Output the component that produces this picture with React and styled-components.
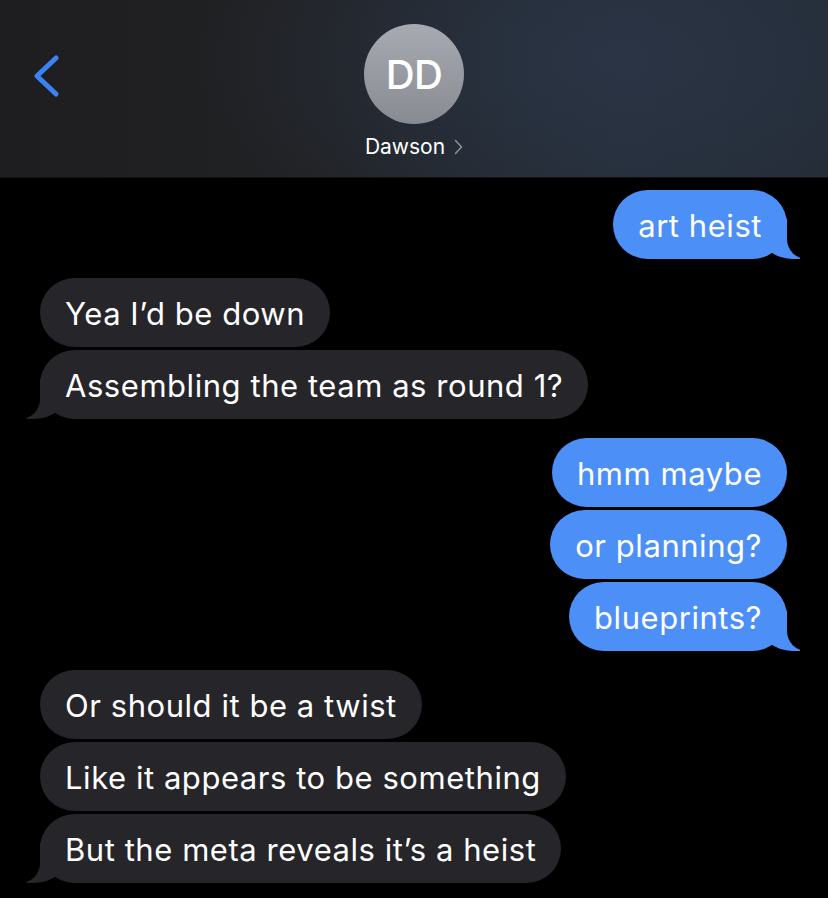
import React from 'react'
import styled, { createGlobalStyle } from 'styled-components'

const GlobalStyle = createGlobalStyle`
  html, body {
    margin: 0;
    padding: 0;
    background: #000;
  }
  body {
    font-family: Inter, "Noto Sans", "Liberation Sans", sans-serif;
    -webkit-font-smoothing: antialiased;
  }
`

const messages = [
  { id: 1, me: true, group: [{ text: 'art heist' }] },
  {
    id: 2,
    me: false,
    group: [{ text: 'Yea I’d be down' }, { text: 'Assembling the team as round 1?' }],
  },
  {
    id: 3,
    me: true,
    group: [{ text: 'hmm maybe' }, { text: 'or planning?' }, { text: 'blueprints?' }],
  },
  {
    id: 4,
    me: false,
    group: [
      { text: 'Or should it be a twist' },
      { text: 'Like it appears to be something' },
      { text: 'But the meta reveals it’s a heist' },
    ],
  },
]

const Screen = styled.div`
  width: 828px;
  height: 898px;
  background: #000;
  overflow: hidden;
  display: flex;
  flex-direction: column;
`

const Header = styled.header`
  height: 178px;
  flex: none;
  display: grid;
  grid-template-columns: 100px 1fr 100px;
  background:
    radial-gradient(ellipse 420px 220px at 620px 60px, rgba(42, 53, 70, 0.9), rgba(42, 53, 70, 0) 100%),
    linear-gradient(90deg, #1e1e20 0%, #212225 40%, #262d38 75%, #232a34 100%);
  border-bottom: 1px solid #111214;
  box-sizing: border-box;
`

const BackButton = styled.div`
  padding: 55px 0 0 31px;
  svg {
    display: block;
  }
`

const Contact = styled.div`
  display: flex;
  flex-direction: column;
  align-items: center;
  padding-top: 24px;
`

const Avatar = styled.div`
  width: 100px;
  height: 100px;
  border-radius: 50%;
  background: linear-gradient(180deg, #a8aab1 0%, #898b93 100%);
  display: flex;
  align-items: center;
  justify-content: center;
  color: #fff;
  font-size: 40px;
  font-weight: 500;
  letter-spacing: -0.5px;
`

const Name = styled.div`
  margin-top: 10px;
  display: flex;
  align-items: center;
  gap: 9px;
  color: #fff;
  font-size: 21px;
  svg {
    display: block;
  }
`

const Thread = styled.main`
  display: flex;
  flex-direction: column;
  gap: 19px;
  padding: 12px 41px 0 40px;
`

const Group = styled.div`
  display: flex;
  flex-direction: column;
  align-items: ${(p) => (p.$me ? 'flex-end' : 'flex-start')};
  gap: 3px;
`

const Bubble = styled.div`
  position: relative;
  height: 69px;
  box-sizing: border-box;
  display: flex;
  align-items: center;
  padding: 2px 25px 0;
  border-radius: 35px;
  font-size: 31px;
  letter-spacing: 0.55px;
  color: #fff;
  white-space: nowrap;
  background: ${(p) => (p.$me ? '#4c8ff6' : '#262529')};

  ${(p) =>
    p.$tail &&
    (p.$me
      ? `
    &::before {
      content: "";
      position: absolute;
      bottom: 0;
      right: -13px;
      width: 40px;
      height: 40px;
      background: #4c8ff6;
      border-bottom-left-radius: 32px 28px;
    }
    &::after {
      content: "";
      position: absolute;
      bottom: 0;
      right: -52px;
      width: 52px;
      height: 40px;
      background: #000;
      border-bottom-left-radius: 20px;
    }
  `
      : `
    &::before {
      content: "";
      position: absolute;
      bottom: 0;
      left: -13px;
      width: 40px;
      height: 40px;
      background: #262529;
      border-bottom-right-radius: 32px 28px;
    }
    &::after {
      content: "";
      position: absolute;
      bottom: 0;
      left: -52px;
      width: 52px;
      height: 40px;
      background: #000;
      border-bottom-right-radius: 20px;
    }
  `)}
`

const BubbleText = styled.span`
  position: relative;
  z-index: 1;
`

const App = () => {
  return (
    <Screen>
      <GlobalStyle />
      <Header>
        <BackButton>
          <svg width="30" height="42" viewBox="0 0 30 42">
            <path
              d="M25 3 L6 21 L25 39"
              fill="none"
              stroke="#3b82f6"
              strokeWidth="5"
              strokeLinecap="round"
              strokeLinejoin="round"
            />
          </svg>
        </BackButton>
        <Contact>
          <Avatar>DD</Avatar>
          <Name>
            Dawson
            <svg width="9" height="16" viewBox="0 0 9 16">
              <path
                d="M1.5 1.5 L7.5 8 L1.5 14.5"
                fill="none"
                stroke="#8d8e93"
                strokeWidth="1.6"
                strokeLinecap="round"
                strokeLinejoin="round"
              />
            </svg>
          </Name>
        </Contact>
        <div />
      </Header>
      <Thread>
        {messages.map((m) => (
          <Group key={m.id} $me={m.me}>
            {m.group.map((b, i) => (
              <Bubble key={i} $me={m.me} $tail={i === m.group.length - 1}>
                <BubbleText>{b.text}</BubbleText>
              </Bubble>
            ))}
          </Group>
        ))}
      </Thread>
    </Screen>
  )
}

export default App
